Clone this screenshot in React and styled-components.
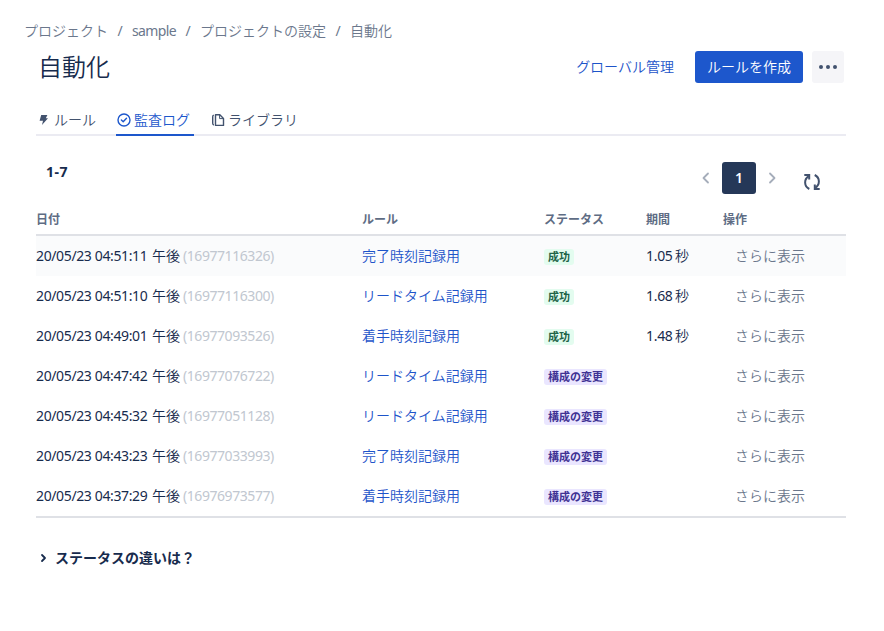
import React from 'react';
import styled, { createGlobalStyle } from 'styled-components';

const GlobalStyle = createGlobalStyle`
  * { box-sizing: border-box; }
  body {
    margin: 0;
    background: #fff;
    color: #172b4d;
    font: 350 14px/20px "Noto Sans", "Noto Sans CJK JP", sans-serif;
    white-space: nowrap;
  }
  a { text-decoration: none; }
`;

const Page = styled.main`
  width: 884px;
  height: 631px;
  padding-top: 21px;
  overflow: hidden;
`;

const Breadcrumbs = styled.nav`
  display: flex;
  height: 20px;
  padding-left: 24px;
  color: #6b778c;
`;

const Crumb = styled.a`
  width: ${(p) => p.$width}px;
  color: inherit;
  font-weight: ${(p) => (p.$latin ? 400 : 350)};
  letter-spacing: ${(p) => (p.$latin ? '-0.6px' : 0)};
`;

const Separator = styled.span`
  width: 24px;
  font-weight: 400;
  text-align: center;
`;

const Content = styled.div`
  width: 810px;
  margin-left: 36px;
`;

const Header = styled.header`
  display: flex;
  align-items: center;
  height: 32px;
  margin-top: 10px;
  padding: 0 2px;
`;

const Title = styled.h1`
  flex: 1;
  margin: 0;
  font-size: 24px;
  font-weight: 350;
  line-height: 32px;
`;

const TextLink = styled.a`
  color: #1d54c9;
`;

const PrimaryButton = styled.button`
  width: 108px;
  height: 32px;
  margin: 0 9px 0 21px;
  padding: 0;
  border: 0;
  border-radius: 3px;
  background: #1d57cc;
  color: #fff;
  font: inherit;
`;

const MoreButton = styled.button`
  display: grid;
  place-items: center;
  width: 32px;
  height: 32px;
  padding: 0;
  border: 0;
  border-radius: 3px;
  background: #f5f5f8;
`;

const Tabs = styled.nav`
  display: flex;
  gap: 16px;
  height: 32px;
  margin-top: 21px;
  box-shadow: inset 0 -2px #ebebf2;
`;

const Tab = styled.a`
  display: flex;
  align-items: center;
  gap: 3px;
  height: 32px;
  padding-right: 4px;
  color: ${(p) => (p.$active ? '#1d57cc' : '#42526e')};
  box-shadow: ${(p) => (p.$active ? 'inset 0 -2px #1d57cc' : 'none')};
`;

const Toolbar = styled.div`
  display: flex;
  align-items: center;
  height: 32px;
  margin-top: 26px;
`;

const Count = styled.strong`
  flex: 1;
  padding: 0 0 12px 10px;
  font-weight: 700;
  letter-spacing: 0.5px;
`;

const Arrow = styled.button`
  display: grid;
  place-items: center;
  width: 32px;
  height: 32px;
  padding: 0;
  border: 0;
  background: none;
`;

const PageNumber = styled.span`
  width: 34px;
  height: 32px;
  border-radius: 3px;
  background: #253858;
  color: #fff;
  font-weight: 600;
  line-height: 32px;
  text-align: center;
`;

const Refresh = styled(Arrow)`
  width: 16px;
  height: 16px;
  margin: 8px 26px 0 16px;
`;

const Table = styled.section`
  margin-top: 8px;
  border-bottom: 2px solid #dfe1e6;
`;

const Row = styled.div`
  display: grid;
  grid-template-columns: 326px 182px 102px 77px 1fr;
  align-items: center;
  height: 40px;
  background: ${(p) => (p.$highlight ? '#fafbfc' : 'transparent')};
`;

const HeadRow = styled(Row)`
  height: 34px;
  padding-top: 3px;
  border-bottom: 2px solid #dfe1e6;
  color: #5e6c84;
  font-size: 12px;
  font-weight: 600;
`;

const Latin = styled.span`
  font-weight: 400;
  letter-spacing: -0.44px;
`;

const DateText = styled.span`
  display: flex;
`;

const Stamp = styled(Latin)`
  width: 116px;
  letter-spacing: -0.37px;
`;

const Meridiem = styled.span`
  width: 31px;
`;

const Muted = styled(Latin)`
  color: #c1c7d0;
`;

const Duration = styled.span`
  display: flex;
`;

const Value = styled(Latin)`
  width: 29px;
  letter-spacing: -0.3px;
`;

const Lozenge = styled.span`
  justify-self: start;
  height: 16px;
  margin-top: 2px;
  padding: 0 4px;
  border-radius: 3px;
  background: ${(p) => (p.$tone === 'success' ? '#e3fcef' : '#eae6ff')};
  color: ${(p) => (p.$tone === 'success' ? '#216448' : '#403294')};
  font-size: 11px;
  font-weight: 700;
  line-height: 16px;
`;

const MoreLink = styled.a`
  padding-left: 12px;
  color: #6b778c;
`;

const Disclosure = styled.div`
  display: flex;
  align-items: center;
  gap: 8px;
  height: 20px;
  margin-top: 30px;
  padding-left: 4px;
  font-weight: 600;
`;

const BoltIcon = () => (
  <svg width="15" height="16" viewBox="0 0 15 16">
    <path d="M5.2 3h6.2L9.8 6.200h2.200L6 13l1-4.300H3.600z" fill="#42526e" />
  </svg>
);

const CheckIcon = () => (
  <svg width="15" height="16" viewBox="0 0 15 16" fill="none" stroke="#1d57cc" strokeWidth="1.4">
    <circle cx="8" cy="8" r="6" />
    <path d="M5.4 8.1 7.2 9.8l3.3-3.5" strokeLinecap="round" strokeLinejoin="round" />
  </svg>
);

const CopyIcon = () => (
  <svg width="15" height="16" viewBox="0 0 15 16" fill="none" stroke="#42526e" strokeWidth="1.4">
    <path d="M5.500 2.700h4.300l3.700 3.700v7H5.500z" strokeLinejoin="round" />
    <path d="M9.600 2.900v3.700h3.700" strokeWidth="1" />
    <path d="M3.800 3.100C2.900 3.400 2.700 4 2.700 4.700v6.600c0 .9.300 1.500 1.200 1.700" />
  </svg>
);

const DotsIcon = () => (
  <svg width="18" height="4" viewBox="0 0 18 4" fill="#42526e">
    <circle cx="2" cy="2" r="2" />
    <circle cx="9" cy="2" r="2" />
    <circle cx="16" cy="2" r="2" />
  </svg>
);

const Chevron = ({ d }) => (
  <svg width="12" height="12" viewBox="0 0 12 12" fill="none" stroke="#a5adba" strokeWidth="1.8" strokeLinecap="round" strokeLinejoin="round">
    <path d={d} />
  </svg>
);

const DisclosureIcon = () => (
  <svg width="7" height="10" viewBox="0 0 7 10" fill="none" stroke="#172b4d" strokeWidth="1.8" strokeLinecap="round" strokeLinejoin="round">
    <path d="M2 2 5 5 2 8" />
  </svg>
);

const RefreshIcon = () => (
  <svg width="16" height="16" viewBox="0 0 16 16" fill="none" stroke="#42526e" strokeWidth="2">
    <path d="M0.300 1H5.200V5.600" />
    <path d="M4.700 2.200C-.2 5.400-.1 12.400 5.300 15" />
    <path d="M15.700 15H10.800V10.400" />
    <path d="M11.300 13.800C16.200 10.600 16.100 3.600 10.700 1" />
  </svg>
);

const entries = [
  ['20/05/23 04:51:11', '16977116326', '完了時刻記録用', '1.05'],
  ['20/05/23 04:51:10', '16977116300', 'リードタイム記録用', '1.68'],
  ['20/05/23 04:49:01', '16977093526', '着手時刻記録用', '1.48'],
  ['20/05/23 04:47:42', '16977076722', 'リードタイム記録用'],
  ['20/05/23 04:45:32', '16977051128', 'リードタイム記録用'],
  ['20/05/23 04:43:23', '16977033993', '完了時刻記録用'],
  ['20/05/23 04:37:29', '16976973577', '着手時刻記録用'],
];

export default function App() {
  return (
    <Page>
      <GlobalStyle />
      <Breadcrumbs>
        <Crumb $width={84}>プロジェクト</Crumb>
        <Separator>/</Separator>
        <Crumb $width={44} $latin>sample</Crumb>
        <Separator>/</Separator>
        <Crumb $width={126}>プロジェクトの設定</Crumb>
        <Separator>/</Separator>
        <Crumb $width={42}>自動化</Crumb>
      </Breadcrumbs>
      <Content>
        <Header>
          <Title>自動化</Title>
          <TextLink>グローバル管理</TextLink>
          <PrimaryButton>ルールを作成</PrimaryButton>
          <MoreButton aria-label="その他"><DotsIcon /></MoreButton>
        </Header>
        <Tabs>
          <Tab><BoltIcon />ルール</Tab>
          <Tab $active><CheckIcon />監査ログ</Tab>
          <Tab><CopyIcon />ライブラリ</Tab>
        </Tabs>
        <Toolbar>
          <Count>1-7</Count>
          <Arrow aria-label="前へ"><Chevron d="M8 1.500 3.500 6 8 10.500" /></Arrow>
          <PageNumber>1</PageNumber>
          <Arrow aria-label="次へ"><Chevron d="M4 1.500 8.500 6 4 10.500" /></Arrow>
          <Refresh aria-label="更新"><RefreshIcon /></Refresh>
        </Toolbar>
        <Table>
          <HeadRow>
            <span>日付</span>
            <span>ルール</span>
            <span>ステータス</span>
            <span>期間</span>
            <span>操作</span>
          </HeadRow>
          {entries.map(([date, id, rule, seconds], i) => (
            <Row key={id} $highlight={i === 0}>
              <DateText>
                <Stamp>{date}</Stamp>
                <Meridiem>午後</Meridiem>
                <Muted>({id})</Muted>
              </DateText>
              <TextLink>{rule}</TextLink>
              <Lozenge $tone={seconds ? 'success' : 'new'}>{seconds ? '成功' : '構成の変更'}</Lozenge>
              <Duration>{seconds && <><Value>{seconds}</Value>秒</>}</Duration>
              <MoreLink>さらに表示</MoreLink>
            </Row>
          ))}
        </Table>
        <Disclosure>
          <DisclosureIcon />
          <span>ステータスの違いは？</span>
        </Disclosure>
      </Content>
    </Page>
  );
}
